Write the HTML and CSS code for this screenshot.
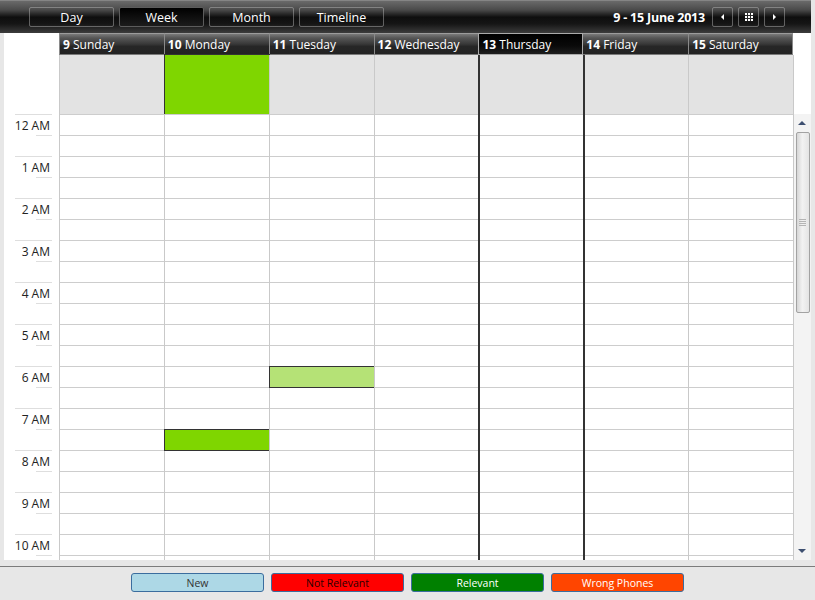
FILE: index.html
```html
<!DOCTYPE html>
<html lang="en">
<head>
<meta charset="utf-8">
<title>Week schedule</title>
<link rel="stylesheet" href="styles.css">
</head>
<body>
<div class="toolbar">
  <div class="views">
    <button class="view">Day</button>
    <button class="view active">Week</button>
    <button class="view">Month</button>
    <button class="view">Timeline</button>
  </div>
  <div class="range">
    <span class="range-label">9 - 15 June 2013</span>
    <button class="nav"><span class="tri-left"></span></button>
    <button class="nav">
      <svg width="8" height="8" viewBox="0 0 8 8"><rect x="0" y="0" width="8" height="8" fill="#fff"/><path d="M2.5 0V8M5.5 0V8M0 2.5H8M0 5.5H8" stroke="#2a2a2a" stroke-width="1"/></svg>
    </button>
    <button class="nav"><span class="tri-right"></span></button>
  </div>
</div>

<div class="calendar">
  <div class="row head-row">
    <div class="blank"></div>
    <div class="day-head"><b>9</b> Sunday</div>
    <div class="day-head"><b>10</b> Monday</div>
    <div class="day-head"><b>11</b> Tuesday</div>
    <div class="day-head"><b>12</b> Wednesday</div>
    <div class="day-head today"><b>13</b> Thursday</div>
    <div class="day-head after-today"><b>14</b> Friday</div>
    <div class="day-head last"><b>15</b> Saturday</div>
    <div class="blank"></div>
  </div>

  <div class="row allday-row">
    <div class="blank"></div>
    <div class="allday-cell"></div>
    <div class="allday-cell"><div class="event allday green"></div></div>
    <div class="allday-cell"></div>
    <div class="allday-cell"></div>
    <div class="allday-cell thu"></div>
    <div class="allday-cell fri"></div>
    <div class="allday-cell"></div>
    <div class="side"></div>
  </div>

  <div class="row body-row">
    <div class="times">
      <div class="hour"><span>12 AM</span></div>
      <div class="hour"><span>1 AM</span></div>
      <div class="hour"><span>2 AM</span></div>
      <div class="hour"><span>3 AM</span></div>
      <div class="hour"><span>4 AM</span></div>
      <div class="hour"><span>5 AM</span></div>
      <div class="hour"><span>6 AM</span></div>
      <div class="hour"><span>7 AM</span></div>
      <div class="hour"><span>8 AM</span></div>
      <div class="hour"><span>9 AM</span></div>
      <div class="hour"><span>10 AM</span></div>
      <div class="hour"></div>
    </div>
    <div class="day-col"></div>
    <div class="day-col"><div class="event green at-0730"></div></div>
    <div class="day-col"><div class="event light at-0600"></div></div>
    <div class="day-col"></div>
    <div class="day-col thu"></div>
    <div class="day-col fri"></div>
    <div class="day-col"></div>
    <div class="scrollbar">
      <div class="sb-btn"><span class="arrow-up"></span></div>
      <div class="thumb"><span class="grip"></span></div>
      <div class="sb-track"></div>
      <div class="sb-btn"><span class="arrow-down"></span></div>
    </div>
  </div>
</div>

<div class="legend">
  <button class="tag new">New</button>
  <button class="tag not-relevant">Not Relevant</button>
  <button class="tag relevant">Relevant</button>
  <button class="tag wrong">Wrong Phones</button>
</div>
</body>
</html>
```

FILE: styles.css
```css
* { box-sizing: border-box; }

body {
  margin: 0;
  width: 815px;
  height: 600px;
  overflow: hidden;
  background: #e7e7e7;
  font-family: "Open Sans", "Noto Sans", sans-serif;
}

/* ---- top toolbar ---- */
.toolbar {
  width: 811px;
  height: 33px;
  display: flex;
  justify-content: space-between;
  align-items: flex-start;
  padding: 7px 26px 0 29px;
  background: linear-gradient(to bottom, #a0a0a0 0, #6a6a6a 1px, #4a4a4a 30%, #0e0e0e 52%, #151515 72%, #3c3c3c 100%);
}

.views { display: flex; gap: 5px; }

.view {
  width: 85px;
  height: 20px;
  padding: 1px 0 0;
  border: 1px solid rgba(190, 190, 190, 0.45);
  border-radius: 2px;
  background: transparent;
  color: #fff;
  font-family: inherit;
  font-size: 12.5px;
  line-height: 17px;
}

.view.active {
  background: linear-gradient(to bottom, #000, #1c1c1c);
  border-color: #5c5c5c;
}

.range { display: flex; align-items: center; gap: 5px; }

.range-label {
  color: #fff;
  font-weight: bold;
  font-size: 12.5px;
  margin-right: 2px;
  letter-spacing: -0.2px;
}

.nav {
  width: 21px;
  height: 20px;
  padding: 0;
  border: 1px solid rgba(190, 190, 190, 0.45);
  border-radius: 2px;
  background: transparent;
  display: flex;
  align-items: center;
  justify-content: center;
}

.tri-left, .tri-right {
  width: 0;
  height: 0;
  border-top: 3px solid transparent;
  border-bottom: 3px solid transparent;
}
.tri-left { border-right: 3px solid #fff; }
.tri-right { border-left: 3px solid #fff; }

/* ---- calendar ---- */
.calendar {
  width: 807px;
  height: 527px;
  margin: 0 4px;
  background: #fff;
  display: flex;
  flex-direction: column;
  overflow: hidden;
}

.row {
  display: grid;
  grid-template-columns: 55px repeat(7, 1fr) 18px;
}

.head-row { height: 22px; flex: none; }

.day-head {
  border-left: 1px solid #8a8a8a;
  border-top: 1px solid #9c9c9c;
  border-bottom: 1px solid #7a7a7a;
  background: linear-gradient(to bottom, #7a7a7a 0, #565656 20%, #383838 50%, #262626 62%, #232323 100%);
  color: #fff;
  font-size: 12px;
  line-height: 19px;
  padding: 1px 0 0 3px;
  white-space: nowrap;
  overflow: hidden;
}

.day-head.last { border-right: 1px solid #8a8a8a; }

.day-head.today {
  background: linear-gradient(to bottom, #000 0, #0a0a0a 60%, #1e1e1e 100%);
  border: 1px solid #ababab;
}

.day-head.after-today { border-left: none; }

.allday-row { height: 59px; flex: none; }

.allday-cell {
  position: relative;
  background: #e3e3e3;
  border-left: 1px solid #c9c9c9;
}

.side { border-left: 1px solid #c9c9c9; }

.body-row { flex: 1; min-height: 0; }

.times { overflow: hidden; }

.hour { position: relative; height: 42px; }

.hour::before,
.hour::after {
  content: "";
  position: absolute;
  right: 7px;
  height: 1px;
  background: #dedede;
}
.hour::before { top: 0; left: 11px; }
.hour::after { top: 21px; left: 32px; }

.hour span {
  display: block;
  padding: 1px 9px 0 0;
  text-align: right;
  font-size: 12px;
  line-height: 21px;
  color: #222;
}

.day-col {
  position: relative;
  border-left: 1px solid #c9c9c9;
  background: repeating-linear-gradient(to bottom, #cdcdcd 0, #cdcdcd 1px, #fff 1px, #fff 21px);
}

/* today's column is framed by dark rules */
.allday-cell.thu, .allday-cell.fri,
.day-col.thu, .day-col.fri { border-left: 2px solid #333; }

/* ---- appointments ---- */
.event {
  position: absolute;
  left: -1px;
  right: -1px;
  height: 22px;
  border: 1px solid #333;
}
.event.allday { top: -1px; bottom: -1px; height: auto; }
.event.green { background: #7fd600; }
.event.light { background: #b5e276; }
.at-0600 { top: 252px; }
.at-0730 { top: 315px; }

/* ---- scrollbar ---- */
.scrollbar {
  border-left: 1px solid #c9c9c9;
  background: #f3f3f3;
  display: flex;
  flex-direction: column;
  align-items: center;
}

.sb-btn {
  height: 17px;
  width: 100%;
  flex: none;
  display: flex;
  align-items: center;
  justify-content: center;
}

.arrow-up, .arrow-down {
  width: 0;
  height: 0;
  border-left: 4px solid transparent;
  border-right: 4px solid transparent;
}
.arrow-up { border-bottom: 4px solid #3d4f70; margin-top: 1px; }
.arrow-down { border-top: 4px solid #3d4f70; margin-bottom: 1px; }

.thumb {
  width: 14px;
  height: 181px;
  flex: none;
  margin-top: 1px;
  margin-left: 1px;
  border: 1px solid #a2a2a2;
  border-radius: 2px;
  background: linear-gradient(to right, #d6d6d6, #f2f2f2 45%, #e4e4e4);
  display: flex;
  align-items: center;
  justify-content: center;
}

.grip {
  width: 7px;
  height: 7px;
  background: repeating-linear-gradient(to bottom, #b4b4b4 0, #b4b4b4 1px, transparent 1px, transparent 2px);
}

.sb-track { flex: 1; }

/* ---- status legend ---- */
.legend {
  height: 34px;
  margin-top: 6px;
  border-top: 1px solid #7c7c7c;
  display: flex;
  justify-content: center;
  gap: 7px;
  padding-top: 6px;
}

.tag {
  width: 133px;
  height: 19px;
  padding: 0;
  border: 1px solid #3b6d9e;
  border-radius: 3px;
  font-family: inherit;
  font-size: 10.5px;
  line-height: 16px;
}
.tag.new { background: #add8e6; color: #333; }
.tag.not-relevant { background: #ff0000; color: #2a0000; }
.tag.relevant { background: #008000; color: #fff; }
.tag.wrong { background: #ff4500; color: #fff; }
```
